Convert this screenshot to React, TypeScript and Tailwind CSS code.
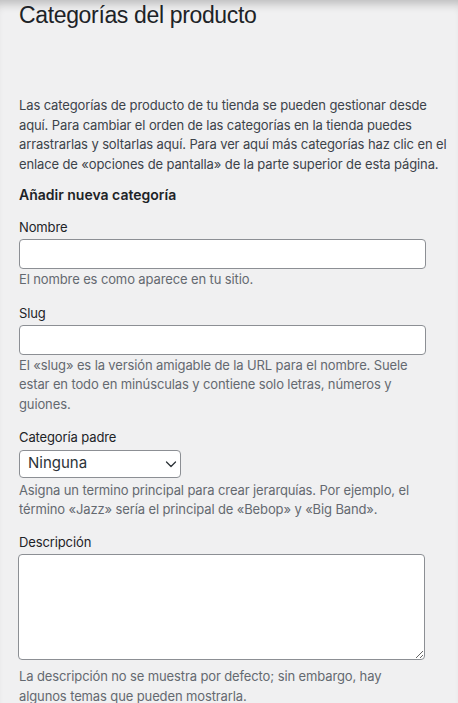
export default function App() {
  return (
    <div
      className="min-h-[703px] w-[458px] overflow-hidden bg-[#f0f0f1] text-[#3c434a] shadow-[inset_0_10px_10px_-6px_rgba(0,0,0,0.22)]"
      style={{ fontFamily: 'Inter, "Noto Sans", sans-serif' }}
    >
      <div className="pl-[19px] tracking-[-0.12px]">
        <h1 className="font-['Liberation_Sans',Arial,sans-serif] text-[23px] leading-[30px] font-normal tracking-[-0.35px] text-[#1d2327]">
          Categorías del producto
        </h1>

        <p className="mt-[66px] w-[436px] text-[13px] leading-[19.5px]">
          Las categorías de producto de tu tienda se pueden gestionar desde aquí. Para cambiar el orden de las
          categorías en la tienda puedes arrastrarlas y soltarlas aquí. Para ver aquí más categorías haz clic en el
          enlace de «opciones de pantalla» de la parte superior de esta página.
        </p>

        <h2 className="mt-[11px] text-[14px] leading-[20px] font-semibold tracking-normal text-[#1d2327]">Añadir nueva categoría</h2>

        <div className="mt-[13px] w-[407px]">
          <label className="block text-[13px] leading-[19.5px] text-[#1d2327]">Nombre</label>
          <input
            type="text"
            className="mt-[1px] block h-[30px] w-[407px] rounded-[4px] border border-[#8c8f94] bg-white px-2 text-[14px]"
          />
          <p className="mt-[1px] text-[13px] leading-[19.5px] text-[#646970]">El nombre es como aparece en tu sitio.</p>
        </div>

        <div className="mt-[15px] w-[407px]">
          <label className="block text-[13px] leading-[19.5px] text-[#1d2327]">Slug</label>
          <input
            type="text"
            className="mt-[1px] block h-[30px] w-[407px] rounded-[4px] border border-[#8c8f94] bg-white px-2 text-[14px]"
          />
          <p className="mt-[1px] text-[13px] leading-[19.5px] text-[#646970]">
            El «slug» es la versión amigable de la URL para el nombre. Suele estar en todo en minúsculas y contiene
            solo letras, números y guiones.
          </p>
        </div>

        <div className="mt-[14px] w-[407px]">
          <label className="block text-[13px] leading-[19.5px] text-[#1d2327]">Categoría padre</label>
          <div className="mt-[2px] flex h-[28px] w-[162px] items-center justify-between rounded-[4px] border border-[#8c8f94] bg-white pl-[8px] pr-[3px] text-[15px] tracking-normal text-[#2c3338]">
            <span>Ninguna</span>
            <svg width="12" height="12" viewBox="0 0 12 12" fill="none" stroke="#2c3338" strokeWidth="1.3" strokeLinecap="round" strokeLinejoin="round">
              <path d="M1.5 4 6 8.5 10.5 4" />
            </svg>
          </div>
          <p className="mt-[3px] text-[13px] leading-[19.5px] text-[#646970]">
            Asigna un termino principal para crear jerarquías. Por ejemplo, el término «Jazz» sería el principal de
            «Bebop» y «Big Band».
          </p>
        </div>

        <div className="mt-[13px] w-[407px]">
          <label className="block text-[13px] leading-[19.5px] text-[#1d2327]">Descripción</label>
          <textarea
            className="-ml-px mt-[2px] block h-[106px] w-[407px] rounded-[4px] border border-[#8c8f94] bg-white px-2 text-[14px]"
          />
          <p className="mt-[7px] text-[13px] leading-[19.5px] text-[#646970]">
            La descripción no se muestra por defecto; sin embargo, hay algunos temas que pueden mostrarla.
          </p>
        </div>
      </div>
    </div>
  );
}
